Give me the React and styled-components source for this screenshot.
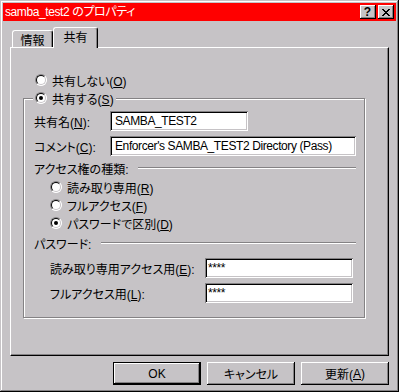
import React from "react";
import styled, { createGlobalStyle } from "styled-components";

const FACE = "#c6c3c6";
const SHADOW = "#848284";

const GlobalStyle = createGlobalStyle`
  html, body {
    margin: 0;
    padding: 0;
    background: ${FACE};
  }
  body {
    font-family: "Liberation Sans", "Noto Sans CJK JP", sans-serif;
    font-size: 12px;
    color: #000;
    font-feature-settings: "palt";
  }
`;

const Window = styled.div`
  width: 399px;
  height: 392px;
  box-sizing: border-box;
  padding: 3px;
  background: ${FACE};
  box-shadow: inset -1px -1px #000, inset 1px 1px ${FACE},
    inset -2px -2px ${SHADOW}, inset 2px 2px #fff;
  display: flex;
  flex-direction: column;
`;

const TitleBar = styled.div`
  height: 18px;
  flex: none;
  background: #ff0000;
  color: #fff;
  display: flex;
  align-items: center;
  padding: 0 2px;
`;

const Title = styled.div`
  flex: 1;
  font-size: 12px;
  line-height: 14px;
  letter-spacing: -0.4px;
  white-space: nowrap;
`;

const Caps = styled.div`
  display: flex;
  gap: 2px;
`;

const CapButton = styled.div`
  width: 16px;
  height: 14px;
  box-sizing: border-box;
  background: ${FACE};
  box-shadow: inset -1px -1px #000, inset 1px 1px #fff, inset -2px -2px ${SHADOW};
  color: #000;
  font-weight: bold;
  font-size: 12px;
  display: flex;
  align-items: center;
  justify-content: center;
  padding-right: 1px;
`;

const Body = styled.div`
  flex: 1;
  display: flex;
  flex-direction: column;
  padding: 6px 7px 0;
`;

const TabStrip = styled.div`
  height: 20px;
  display: flex;
  align-items: flex-end;
  padding-left: 2px;
  position: relative;
  z-index: 1;
`;

const Tab = styled.div`
  box-sizing: border-box;
  width: ${p => p.w}px;
  height: ${p => (p.active ? 21 : 17)}px;
  margin-bottom: ${p => (p.active ? -1 : 0)}px;
  border: 1px solid #fff;
  border-right-color: #000;
  border-bottom: none;
  border-radius: 3px 3px 0 0;
  box-shadow: inset -1px 0 ${SHADOW};
  background: ${FACE};
  display: flex;
  align-items: center;
  justify-content: center;
  padding-bottom: ${p => (p.active ? 3 : 0)}px;
  font-size: 12px;
`;

const Panel = styled.div`
  height: 309px;
  box-sizing: border-box;
  border: 1px solid #fff;
  border-right-color: #000;
  border-bottom-color: #000;
  box-shadow: inset -1px -1px ${SHADOW};
  padding: 23px 23px 0 12px;
  display: flex;
  flex-direction: column;
`;

const RadioRow = styled.div`
  height: 18px;
  display: flex;
  align-items: center;
  gap: 5px;
  white-space: nowrap;
  margin-left: ${p => p.indent || 0}px;
`;

const RadioCircle = styled.span`
  position: relative;
  flex: none;
  width: 12px;
  height: 12px;
  box-sizing: border-box;
  border-radius: 50%;
  border: 1px solid;
  border-color: ${SHADOW} #fff #fff ${SHADOW};
  background: #fff;
  &::before {
    content: "";
    position: absolute;
    inset: 0;
    border-radius: 50%;
    border: 1px solid;
    border-color: #000 ${FACE} ${FACE} #000;
  }
  &::after {
    content: "";
    display: ${p => (p.checked ? "block" : "none")};
    position: absolute;
    left: 3px;
    top: 3px;
    width: 4px;
    height: 4px;
    border-radius: 50%;
    background: #000;
  }
`;

const Group = styled.div`
  height: 220px;
  flex: none;
  margin-top: 9px;
  box-sizing: border-box;
  border: 1px solid ${SHADOW};
  box-shadow: inset 1px 1px #fff, 1px 1px #fff;
  padding: 0 8px 0 10px;
  display: flex;
  flex-direction: column;
`;

const Legend = styled.div`
  align-self: flex-start;
  margin: -10px 0 0 -1px;
  padding: 0 2px;
  background: ${FACE};
`;

const FieldRow = styled.div`
  display: flex;
  align-items: center;
  height: 20px;
  margin-top: ${p => p.gap}px;
  padding-left: ${p => p.indent || 0}px;
`;

const Label = styled.span`
  width: ${p => p.w}px;
  flex: none;
  white-space: nowrap;
`;

const TextBox = styled.div`
  box-sizing: border-box;
  width: ${p => p.w}px;
  height: 20px;
  background: #fff;
  box-shadow: inset 1px 1px ${SHADOW}, inset -1px -1px #fff,
    inset 2px 2px #000, inset -2px -2px ${FACE};
  padding-left: ${p => p.pad || 5}px;
  display: flex;
  align-items: center;
  white-space: nowrap;
  overflow: hidden;
  letter-spacing: -0.4px;
`;

const SectionHead = styled.div`
  height: 12px;
  display: flex;
  align-items: center;
  gap: 10px;
  margin-top: ${p => p.gap}px;
  white-space: nowrap;
`;

const Etch = styled.div`
  flex: 1;
  height: 0;
  border-top: 1px solid ${SHADOW};
  border-bottom: 1px solid #fff;
`;

const RadioList = styled.div`
  margin-top: 4px;
  padding-left: 16px;
  display: flex;
  flex-direction: column;
`;

const ButtonRow = styled.div`
  margin-top: 6px;
  display: flex;
  justify-content: flex-end;
  gap: 6px;
`;

const Button = styled.div`
  width: 88px;
  height: 23px;
  box-sizing: border-box;
  background: ${FACE};
  box-shadow: ${p =>
    p.primary
      ? `inset 0 0 0 1px #000, inset -2px -2px #000, inset 2px 2px #fff, inset -3px -3px ${SHADOW}`
      : `inset -1px -1px #000, inset 1px 1px #fff, inset -2px -2px ${SHADOW}`};
  display: flex;
  align-items: center;
  justify-content: center;
  white-space: nowrap;
`;

const U = styled.span`
  text-decoration: underline;
`;

function Radio({ checked, children, indent }) {
  return (
    <RadioRow indent={indent}>
      <RadioCircle checked={checked} />
      <span>{children}</span>
    </RadioRow>
  );
}

export default function App() {
  return (
    <>
      <GlobalStyle />
      <Window>
        <TitleBar>
          <Title>samba_test2 のプロパティ</Title>
          <Caps>
            <CapButton>?</CapButton>
            <CapButton>
              <svg width="8" height="7" viewBox="0 0 8 7">
                <path d="M0 0h2v1h1v1h2V1h1V0h2v1H7v1H6v1H5v1h1v1h1v1h1v1H6V6H5V5H3v1H2v1H0V6h1V5h1V4h1V3H2V2H1V1H0z" fill="#000" />
              </svg>
            </CapButton>
          </Caps>
        </TitleBar>
        <Body>
          <TabStrip>
            <Tab w={41}>情報</Tab>
            <Tab w={45} active>共有</Tab>
          </TabStrip>
          <Panel>
            <Radio indent={12}>
              共有しない(<U>O</U>)
            </Radio>
            <Group>
              <Legend>
                <Radio checked>
                  共有する(<U>S</U>)
                </Radio>
              </Legend>
              <FieldRow gap={4}>
                <Label w={76}>
                  共有名(<U>N</U>):
                </Label>
                <TextBox w={138}>SAMBA_TEST2</TextBox>
              </FieldRow>
              <FieldRow gap={5}>
                <Label w={76}>
                  コメント(<U>C</U>):
                </Label>
                <TextBox w={246}>Enforcer's SAMBA_TEST2 Directory (Pass)</TextBox>
              </FieldRow>
              <SectionHead gap={6}>
                アクセス権の種類:
                <Etch />
              </SectionHead>
              <RadioList>
                <Radio>
                  読み取り専用(<U>R</U>)
                </Radio>
                <Radio>
                  フルアクセス(<U>F</U>)
                </Radio>
                <Radio checked>
                  パスワードで区別(<U>D</U>)
                </Radio>
              </RadioList>
              <SectionHead gap={5}>
                パスワード:
                <Etch />
              </SectionHead>
              <FieldRow gap={9} indent={16}>
                <Label w={155}>
                  読み取り専用アクセス用(<U>E</U>):
                </Label>
                <TextBox w={148} pad={3}>****</TextBox>
              </FieldRow>
              <FieldRow gap={5} indent={16}>
                <Label w={155}>
                  フルアクセス用(<U>L</U>):
                </Label>
                <TextBox w={148} pad={3}>****</TextBox>
              </FieldRow>
            </Group>
          </Panel>
          <ButtonRow>
            <Button primary>OK</Button>
            <Button>キャンセル</Button>
            <Button>
              更新(<U>A</U>)
            </Button>
          </ButtonRow>
        </Body>
      </Window>
    </>
  );
}
